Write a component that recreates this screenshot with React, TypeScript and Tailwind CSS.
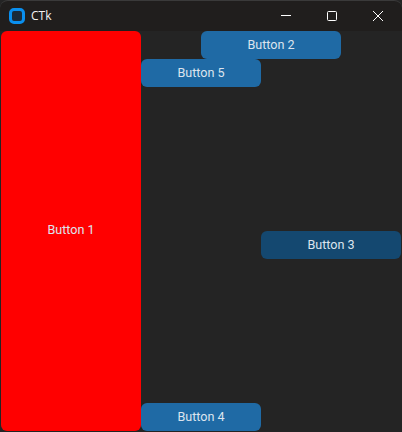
function TitleBar() {
  return (
    <div className="h-[31px] flex items-center bg-[#201e1d] border-t border-[#3a3a3a] rounded-t-lg">
      <div className="w-[16px] h-[16px] ml-[9px] rounded-[5px] border-[3px] border-[#0a8fee] bg-[#1a2b3a]" />
      <span className="ml-[6px] text-[12px] text-[#f2f2f2] font-['Open_Sans',sans-serif]">CTk</span>
      <div className="ml-auto flex items-center">
        <div className="w-[46px] flex justify-center pr-[2px]">
          <svg width="10" height="10" viewBox="0 0 10 10" fill="none" stroke="#fff" shapeRendering="crispEdges">
            <path d="M0 4.5H10" />
          </svg>
        </div>
        <div className="w-[46px] flex justify-center pr-[2px]">
          <svg width="10" height="10" viewBox="0 0 10 10" fill="none" stroke="#fff">
            <rect x="0.5" y="0.5" width="9" height="9" rx="1" />
          </svg>
        </div>
        <div className="w-[46px] flex justify-center pr-[2px]">
          <svg width="10" height="10" viewBox="0 0 10 10" fill="none" stroke="#fff">
            <path d="M0 0L10 10M10 0L0 10" />
          </svg>
        </div>
      </div>
    </div>
  );
}

function Btn({ label, className }: { label: string; className: string }) {
  return (
    <button className={`flex items-center justify-center rounded-[6px] text-[12.6px] text-[#dce4ee] font-['Roboto',sans-serif] ${className}`}>
      {label}
    </button>
  );
}

export default function App() {
  return (
    <div className="w-[402px] h-[432px] bg-[#242424] overflow-hidden flex flex-col">
      <TitleBar />
      <div className="grid ml-px grid-cols-[140px_60px_60px_80px_60px] grid-rows-[28px_28px_144px_28px_144px_28px]">
        <Btn label="Button 1" className="col-start-1 row-start-1 row-span-6 bg-[#ff0000] pb-[2px]" />
        <Btn label="Button 2" className="col-start-3 col-span-2 row-start-1 bg-[#1f6aa5]" />
        <Btn label="Button 5" className="col-start-2 col-span-2 row-start-2 bg-[#1f6aa5]" />
        <Btn label="Button 3" className="col-start-4 col-span-2 row-start-4 bg-[#144870]" />
        <Btn label="Button 4" className="col-start-2 col-span-2 row-start-6 bg-[#1f6aa5]" />
      </div>
    </div>
  );
}
